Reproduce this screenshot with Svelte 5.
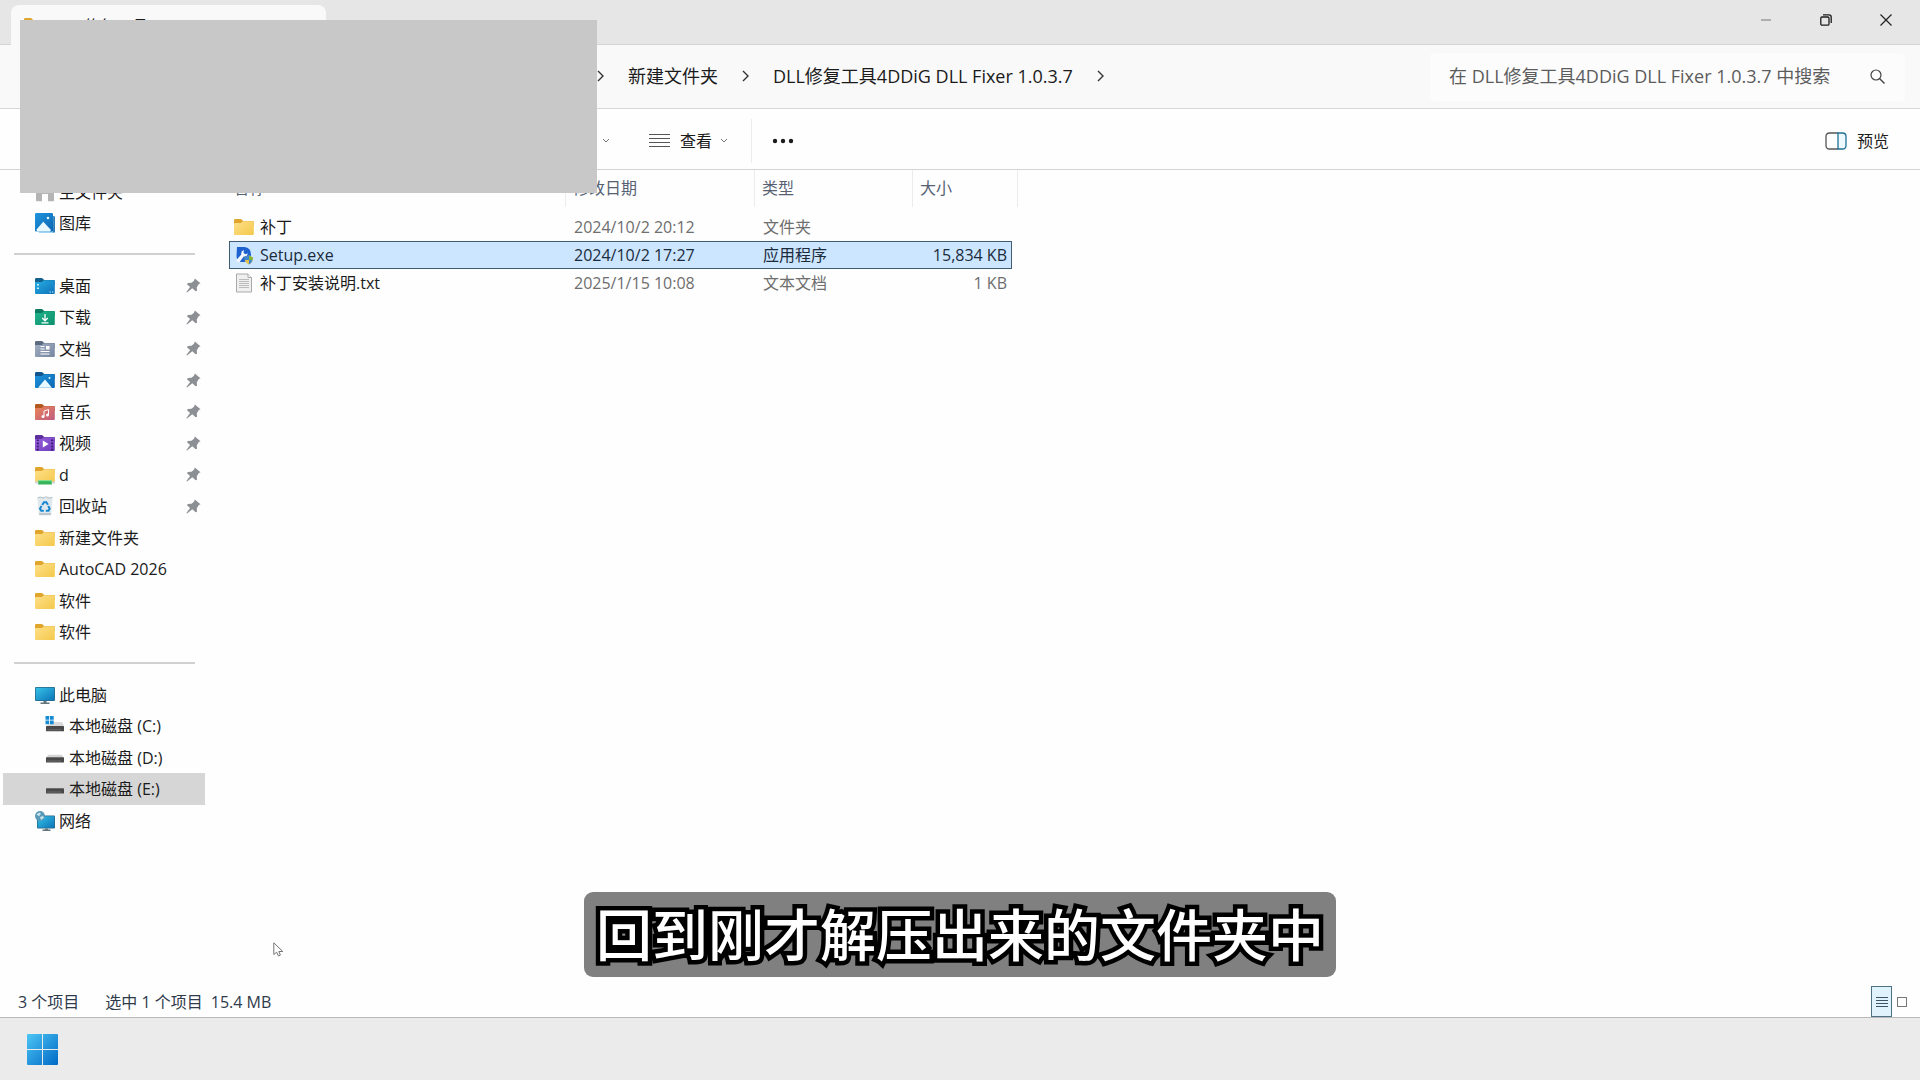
<script>
    const home = [
        { name: "主文件夹", icon: "home" },
        { name: "图库", icon: "gallery" },
    ];

    const pinned = [
        { name: "桌面", icon: "desktop", pin: true },
        { name: "下载", icon: "download", pin: true },
        { name: "文档", icon: "documents", pin: true },
        { name: "图片", icon: "pictures", pin: true },
        { name: "音乐", icon: "music", pin: true },
        { name: "视频", icon: "video", pin: true },
        { name: "d", icon: "shared", pin: true },
        { name: "回收站", icon: "recycle", pin: true },
        { name: "新建文件夹", icon: "folder" },
        { name: "AutoCAD 2026", icon: "folder" },
        { name: "软件", icon: "folder" },
        { name: "软件", icon: "folder" },
    ];

    const computer = [
        { name: "此电脑", icon: "pc" },
        { name: "本地磁盘 (C:)", icon: "system", drive: true },
        { name: "本地磁盘 (D:)", icon: "disk", drive: true },
        { name: "本地磁盘 (E:)", icon: "disk", drive: true, active: true },
        { name: "网络", icon: "network" },
    ];

    const files = [
        { name: "补丁", icon: "folder", date: "2024/10/2 20:12", type: "文件夹", size: "" },
        { name: "Setup.exe", icon: "setup", date: "2024/10/2 17:27", type: "应用程序", size: "15,834 KB" },
        { name: "补丁安装说明.txt", icon: "text", date: "2025/1/15 10:08", type: "文本文档", size: "1 KB" },
    ];

    let selected = $state(1);

    // tab and front colours of the folder icons
    const folders = {
        folder: ["#e0a52c", "url(#g-yellow)"],
        shared: ["#e0a52c", "url(#g-yellow)"],
        desktop: ["#13608f", "url(#g-blue)"],
        download: ["#0b7a5e", "url(#g-green)"],
        documents: ["#5c6b80", "url(#g-slate)"],
        pictures: ["#13568f", "url(#g-azure)"],
        music: ["#b3591f", "url(#g-coral)"],
        video: ["#5b2f9e", "url(#g-purple)"],
    };
</script>

{#snippet icon(kind)}
    <svg class="icon" viewBox="0 0 20 20" aria-hidden="true">
        {#if folders[kind]}
            <path d="M0 3.2Q0 2 1.2 2h5.3q.7 0 1.2.5L9.200 4H19q.8 0 .8.8V9H0z" fill={folders[kind][0]} />
            <path d="M0 7q0-.9.9-.9h5.300q.7 0 1.200-.5L8.500 4.600q.4-.4 1-.4h9.400q.9 0 .9.9v12q0 .9-.9.9H.9q-.9 0-.9-.9z" fill={folders[kind][1]} />
        {/if}
        {#if kind === "desktop"}
            <path d="M2 8h2v1.500H2zM2 11.500h2V13H2zM14.500 15.500h1.300v1h-1.300zM17 15.500h1.300v1H17z" fill="#c8f1ff" />
        {:else if kind === "download"}
            <path d="M10 7v6.500M7.200 11l2.800 2.800 2.800-2.800M6.500 15.800h7" fill="none" stroke="#fff" stroke-width="1.300" />
        {:else if kind === "documents"}
            <path d="M5.500 7.500h4M5.500 10h4M5.500 12.500h9M5.500 15h9" stroke="#fff" stroke-width="1.200" />
            <path d="M11 7h3.500v3.500H11z" fill="#fff" />
        {:else if kind === "pictures"}
            <path d="M3 17.800 10 9.500l7 8.300z" fill="#e8faff" />
            <circle cx="14.500" cy="8" r="1" fill="#e8faff" />
        {:else if kind === "music"}
            <path d="M9 14.500V9l4.500-1.500v5.500" fill="none" stroke="#fff" />
            <circle cx="8" cy="14.500" r="1.500" fill="#fff" />
            <circle cx="12.500" cy="13" r="1.500" fill="#fff" />
        {:else if kind === "video"}
            <path d="M7.800 7.500v7l5.800-3.500z" fill="#fff" />
            <path d="M2.800 6.500v11M17.200 6.500v11" stroke="#3a1a70" stroke-width="2" stroke-dasharray="1.600 1.500" />
        {:else if kind === "shared"}
            <path d="M3 15h14v4.500H3z" fill="#35b558" />
            <path d="M0 17.500h3.500M16.500 17.500H20" stroke="#cfd6d8" stroke-width="2" />
            <path d="M3 15h14v1.200H3z" fill="#82df8f" />
        {:else if kind === "home"}
            <path d="M1 8 10 1l9 7v10.500q0 .8-.8.8H13V12H7v7.300H1.800q-.8 0-.8-.8z" fill="#b4b4b4" />
            <path d="M0 9 10 1l10 8" fill="none" stroke="#e07b32" stroke-width="1.500" />
        {:else if kind === "gallery"}
            <path d="M4 3h14.500q1.300 0 1.300 1.300v14q0 1.500-1.500 1.500H4z" fill="#7cc8ee" />
            <path d="M18.500 3q1.300 0 1.300 1.300v14q0 1.500-1.500 1.500" fill="#1467a8" />
            <rect width="18" height="18.500" rx="1.200" fill="url(#g-azure)" />
            <path d="M1.500 16.500 8.300 8.800l7.700 8.200-1 1.500H2z" fill="#e8f8ff" />
            <circle cx="13" cy="5" r="1.300" fill="#e8f8ff" />
        {:else if kind === "recycle"}
            <path d="M2.500 2h15l-1.300 16.500q-.1 1-1 1H4.800q-.9 0-1-1z" fill="#dfe8ed" />
            <path d="M2.500 2 5 1l3 1 3-1.200L14 2l3.500-.5" fill="none" stroke="#aebac2" />
            <path d="M4 17h12v2H4.500z" fill="#bdc6cc" />
            <path d="m7.200 9 1.800-2.800h2.300L13 8.800M13.200 10l1.500 2.700-1.200 2h-2.700M8.800 14.700H6.200l-1.200-2L6.500 10" fill="none" stroke="#1785d1" stroke-width="2" />
        {:else if kind === "pc"}
            <rect y="2" width="20" height="14" rx="1" fill="#286b8e" />
            <rect x=".8" y="2.800" width="18.400" height="12.400" fill="url(#g-screen)" />
            <path d="M8.500 16h3v1.500h3V19h-9v-1.500h3z" fill="#66747c" />
        {:else if kind === "network"}
            <rect x="2" y="4.500" width="18" height="13" rx="1" fill="#286b8e" />
            <rect x="2.800" y="5.300" width="16.400" height="11.400" fill="url(#g-screen)" />
            <path d="M10 17.500h3v1h2.500V20h-8v-1.500H10z" fill="#66747c" />
            <circle cx="5" cy="5" r="5" fill="#5a9ab7" />
            <path d="M1.500 3.500 4 1.500l2 1.300-2 2.500zM5 6l3-1 1 1.800L6 9z" fill="#c8e4ec" />
        {:else if kind === "disk"}
            <path d="M2.500 6.800h13l2.500 3H0z" fill="#d5d5d5" />
            <rect y="9.200" width="18" height="5.300" rx=".6" fill="#494949" />
            <path d="M1 13h14" stroke="#6d6d6d" />
        {:else if kind === "system"}
            <path d="M8 6h8l2 4H0z" fill="#d9d9d9" />
            <rect y="10" width="18" height="5.300" rx=".6" fill="#494949" />
            <path d="M1 13.800h14" stroke="#6d6d6d" />
            <path d="M-.5 0h3.700v3.700H-.5zM4 0h3.700v3.700H4zM-.5 4.500h3.700v3.700H-.5zM4 4.500h3.700v3.700H4z" fill="#168bd3" />
        {:else if kind === "setup"}
            <path d="M3 2h7.500q6.500.5 6.500 7.500 0 7-7 7.500H7q-4.500-1-4.500-6z" fill="#1e62cf" />
            <path d="M2 15.500 7.300 9.500Q6.500 6 10 5l-.5 2.700 1.800 1.500 2.500-.7q-.5 3.300-4 3L5.500 17q-2 .8-3.500-1.500z" fill="#f2f7ff" />
            <path d="M10.500 12.500 15 10.500l4 2q0 5-4.200 7-4.300-2-4.300-7z" fill="#e9c440" />
            <path d="M15 10.500v4.500h-4.300q-.2-1.200-.2-2.500z" fill="#3c83d2" />
            <path d="M15 15h3.500q-.8 3-3.700 4.500z" fill="#3c83d2" />
            <path d="M15 10.500v4.500h3.700q.3-1.200.3-2.500z" fill="#86b53b" />
        {:else if kind === "text"}
            <path d="M2.500 1h11.500l3.500 3.500V19h-15z" fill="#f0f0f0" stroke="#a9a9a9" />
            <path d="M14 1v3.500h3.500" fill="#fff" stroke="#a9a9a9" />
            <path d="M5 6.500h10M5 8.500h10M5 10.500h10M5 12.500h10M5 14.500h10" stroke="#b5b5b5" stroke-width=".9" />
        {/if}
    </svg>
{/snippet}

{#snippet chevron()}
    <svg class="chevron" viewBox="0 0 7 12" aria-hidden="true">
        <path d="m1 1 5 5-5 5" fill="none" stroke="#333" stroke-width="1.400" />
    </svg>
{/snippet}

{#snippet caret()}
    <svg class="caret" viewBox="0 0 8 6" aria-hidden="true">
        <path d="m1 1 3 3 3-3" fill="none" stroke="#777" />
    </svg>
{/snippet}

{#snippet places(items)}
    <ul>
        {#each items as item}
            <li>
                <a href="#top" class:drive={item.drive} class:active={item.active}>
                    {@render icon(item.icon)}
                    <span>{item.name}</span>
                    {#if item.pin}
                        <svg class="pin" viewBox="0 0 15 15" aria-hidden="true">
                            <path d="m8.800.5 5.700 4.800-1.700.8-2 3.200.2 3.400-1.300.6-3.400-3L1 14.500l-.6-.5 3.700-5L1 6.300l.8-1.200 3.700-.3 2.500-2z" fill="#8c8f93" />
                        </svg>
                    {/if}
                </a>
            </li>
        {/each}
    </ul>
{/snippet}

<svg class="defs" aria-hidden="true">
    <defs>
        <linearGradient id="g-yellow" x2="1" y2="1"><stop stop-color="#ffe08a" /><stop offset="1" stop-color="#f3c84b" /></linearGradient>
        <linearGradient id="g-blue" x2="1" y2="1"><stop stop-color="#27b0e4" /><stop offset="1" stop-color="#0e70b8" /></linearGradient>
        <linearGradient id="g-green" x2="1" y2="1"><stop stop-color="#21b58c" /><stop offset="1" stop-color="#0c8f6c" /></linearGradient>
        <linearGradient id="g-slate" x2="1" y2="1"><stop stop-color="#a3b0c4" /><stop offset="1" stop-color="#7686a0" /></linearGradient>
        <linearGradient id="g-azure" x2="1" y2="1"><stop stop-color="#1f96dc" /><stop offset="1" stop-color="#0c65b3" /></linearGradient>
        <linearGradient id="g-coral" x2="1" y2="1"><stop stop-color="#ea8756" /><stop offset="1" stop-color="#bf5a80" /></linearGradient>
        <linearGradient id="g-purple" x2="1" y2="1"><stop stop-color="#9a62dd" /><stop offset="1" stop-color="#6e3cbd" /></linearGradient>
        <linearGradient id="g-screen" x2="1" y2="1"><stop stop-color="#36c2e6" /><stop offset="1" stop-color="#0c75b9" /></linearGradient>
        <linearGradient id="g-start" x2="1" y2="1"><stop stop-color="#4cc6f5" /><stop offset="1" stop-color="#0068c6" /></linearGradient>
    </defs>
</svg>

<div class="desktop" id="top">
    <header class="titlebar">
        <div class="tab">
            {@render icon("folder")}
            <span>DLL修复工具4DDiG DLL Fixer</span>
        </div>
        <div class="controls">
            <button aria-label="最小化">
                <svg viewBox="0 0 12 12"><path d="M1 6h10" stroke="#777" /></svg>
            </button>
            <button aria-label="还原">
                <svg viewBox="0 0 12 12" fill="none" stroke="#1c1c1c" stroke-width="1.300">
                    <rect x=".8" y="3" width="8.200" height="8.200" rx="1.200" />
                    <path d="M3 .9h6q2.200 0 2.200 2.200v6" />
                </svg>
            </button>
            <button aria-label="关闭">
                <svg viewBox="0 0 12 12"><path d="m.5.5 11 11m0-11-11 11" stroke="#222" stroke-width="1.200" /></svg>
            </button>
        </div>
    </header>

    <div class="address">
        <nav class="crumbs">
            {@render chevron()}
            <a href="#top">新建文件夹</a>
            {@render chevron()}
            <a href="#top">DLL修复工具4DDiG DLL Fixer 1.0.3.7</a>
            {@render chevron()}
        </nav>
        <div class="search">
            <input type="text" aria-label="搜索" placeholder="在 DLL修复工具4DDiG DLL Fixer 1.0.3.7 中搜索" />
            <svg viewBox="0 0 15 15" aria-hidden="true">
                <path d="m9.500 9.500 5 5" stroke="#444" stroke-width="1.400" />
                <circle cx="6" cy="6" r="5" fill="none" stroke="#444" stroke-width="1.200" />
            </svg>
        </div>
    </div>

    <div class="toolbar">
        {@render caret()}
        <button class="view">
            <svg viewBox="0 0 21 14" aria-hidden="true"><path d="M0 .5h21M0 4.500h21M0 8.500h21M0 12.500h21" stroke="#555" /></svg>
            <span>查看</span>
            {@render caret()}
        </button>
        <button class="more" aria-label="更多">
            <svg viewBox="0 0 22 6" aria-hidden="true" fill="#1c1c1c">
                <circle cx="3" cy="3" r="2.200" /><circle cx="11" cy="3" r="2.200" /><circle cx="19" cy="3" r="2.200" />
            </svg>
        </button>
        <button class="preview">
            <svg viewBox="0 0 22 18" aria-hidden="true" fill="none" stroke-width="1.300">
                <path d="M13 1H4.500Q1 1 1 4.500v9Q1 17 4.500 17H13" stroke="#555" />
                <path d="M13 1h4.500Q21 1 21 4.500v9q0 3.500-3.500 3.500H13z" stroke="#1f7096" fill="#edf9fe" />
            </svg>
            <span>预览</span>
        </button>
    </div>

    <main>
        <nav class="sidebar">
            {@render places(home)}
            <hr />
            {@render places(pinned)}
            <hr />
            {@render places(computer)}
        </nav>

        <section class="files">
            <table>
                <colgroup>
                    <col class="c-name" /><col class="c-date" /><col class="c-type" /><col class="c-size" /><col class="c-end" />
                </colgroup>
                <thead>
                    <tr>
                        <th><span>名称</span></th>
                        <th><span>修改日期</span></th>
                        <th><span>类型</span></th>
                        <th colspan="2"><span>大小</span></th>
                    </tr>
                </thead>
                <tbody>
                    {#each files as file, i}
                        <tr class:selected={selected === i} onclick={() => (selected = i)}>
                            <td><div class="name">{@render icon(file.icon)}{file.name}</div></td>
                            <td>{file.date}</td>
                            <td>{file.type}</td>
                            <td class="size">{file.size}</td>
                        </tr>
                    {/each}
                </tbody>
            </table>
        </section>
    </main>

    <footer class="status">
        <span class="count">3 个项目</span>
        <span class="chosen">选中 1 个项目</span>
        <span>15.4 MB</span>
        <div class="layouts">
            <button class="details" aria-label="详细信息">
                <svg viewBox="0 0 12 12"><path d="M0 1.500h12M0 4.500h12M0 7.500h12M0 10.500h12" stroke="#3b5566" /></svg>
            </button>
            <button class="large" aria-label="大图标"></button>
        </div>
    </footer>

    <div class="taskbar">
        <button aria-label="开始">
            <svg viewBox="0 0 31 31">
                <path d="M1 0h14v15H0V1q0-1 1-1zM16 0h14q1 0 1 1v14H16zM0 16h15v15H1q-1 0-1-1zM16 16h15v14q0 1-1 1H16z" fill="url(#g-start)" />
            </svg>
        </button>
    </div>

    <div class="cover"></div>
    <p class="caption">回到刚才解压出来的文件夹中</p>
    <svg class="cursor" viewBox="0 0 11 15" aria-hidden="true">
        <path d="M.8.800v11.700l2.900-2.300 1.700 3.800 2-.9-1.600-3.600h4z" fill="#fff" stroke="#777" />
    </svg>
</div>

<style>
    :global(body) {
        margin: 0;
    }

    .desktop {
        position: relative;
        display: flex;
        flex-direction: column;
        min-height: 100vh;
        overflow: hidden;
        background: #fefefe;
        color: #1b1b1b;
        font: 16px/24px "Open Sans", "Noto Sans CJK SC", sans-serif;
    }

    .defs {
        position: absolute;
        width: 0;
        height: 0;
    }

    svg {
        display: block;
        flex: none;
        overflow: visible;
    }

    button {
        display: flex;
        align-items: center;
        padding: 0;
        border: 0;
        background: none;
        color: inherit;
        font: inherit;
    }

    a {
        color: inherit;
        text-decoration: none;
    }

    .icon {
        width: 20px;
        height: 20px;
    }

    .titlebar {
        display: flex;
        justify-content: space-between;
        height: 44px;
        border-bottom: 1px solid #d4d4d4;
        background: #e6e6e6;
    }

    .tab {
        display: flex;
        align-items: center;
        gap: 12px;
        box-sizing: border-box;
        width: 315px;
        height: 40px;
        margin: 5px 0 0 11px;
        padding: 2px 0 0 13px;
        border-radius: 8px 8px 0 0;
        background: #f9f9f9;
    }

    .controls {
        display: flex;
        margin-right: 4px;
    }

    .controls button {
        justify-content: center;
        width: 60px;
        height: 40px;
    }

    .controls svg {
        width: 12px;
        height: 12px;
    }

    .address {
        display: flex;
        align-items: center;
        justify-content: space-between;
        height: 63px;
        padding-right: 15px;
        border-bottom: 1px solid #d6d6d6;
        background: #f9f9f9;
        font-size: 18px;
    }

    .crumbs {
        display: flex;
        align-items: center;
        gap: 24px;
        padding: 0 0 2px 597px;
    }

    .chevron {
        width: 7px;
        height: 12px;
    }

    .search {
        display: flex;
        align-items: center;
        box-sizing: border-box;
        width: 475px;
        height: 48px;
        padding: 0 20px 1px 19px;
        border-radius: 4px;
        background: #fcfcfc;
    }

    .search input {
        flex: 1;
        min-width: 0;
        padding: 0;
        border: 0;
        outline: 0;
        background: none;
        font: inherit;
    }

    .search input::placeholder {
        color: #5c5c5c;
        opacity: 1;
    }

    .search svg {
        width: 15px;
        height: 15px;
    }

    .toolbar {
        display: flex;
        align-items: center;
        box-sizing: border-box;
        height: 61px;
        padding: 4px 31px 0 602px;
        border-bottom: 1px solid #d4d4d4;
        background: #fefefe;
    }

    .caret {
        width: 8px;
        height: 6px;
    }

    .view {
        gap: 8px;
        margin-left: 39px;
        padding-right: 23px;
    }

    .view > svg:first-child {
        width: 21px;
        height: 14px;
        margin-right: 2px;
    }

    .more {
        height: 44px;
        padding-left: 20px;
        border-left: 1px solid #ececec;
    }

    .more svg {
        width: 22px;
        height: 6px;
    }

    .preview {
        gap: 10px;
        margin-left: auto;
    }

    .preview svg {
        width: 22px;
        height: 18px;
    }

    main {
        display: flex;
        flex: 1;
    }

    .sidebar {
        width: 208px;
        padding-top: 6px;
    }

    .sidebar ul {
        margin: 0;
        padding: 0 3px;
        list-style: none;
    }

    .sidebar li {
        height: 31px;
    }

    .sidebar li:nth-child(even) {
        height: 32px;
    }

    .sidebar a {
        display: flex;
        align-items: center;
        gap: 4px;
        height: 100%;
        padding: 0 4px 0 32px;
    }

    .sidebar a.drive {
        padding-left: 43px;
        gap: 3px;
    }

    .sidebar a.active {
        background: #d6d6d6;
    }

    .sidebar hr {
        height: 2px;
        margin: 14px 13px 15px 14px;
        border: 0;
        background: #d0d0d0;
    }

    .pin {
        width: 15px;
        height: 15px;
        margin-left: auto;
    }

    .files {
        flex: 1;
        padding-left: 21px;
    }

    table {
        width: 789px;
        border-spacing: 0;
        table-layout: fixed;
    }

    .c-name {
        width: 337px;
    }

    .c-date {
        width: 189px;
    }

    .c-type {
        width: 158px;
    }

    .c-size {
        width: 99px;
    }

    .c-end {
        width: 6px;
    }

    th {
        padding: 0 0 6px;
        color: #566173;
        font-weight: 400;
        text-align: left;
    }

    th span {
        display: block;
        padding-left: 7px;
        border-right: 1px solid #ececec;
        line-height: 37px;
    }

    th:first-child span {
        padding-left: 4px;
    }

    td {
        box-sizing: border-box;
        height: 28px;
        padding: 0 8px;
        border: solid transparent;
        border-width: 1px 0;
        color: #6e6e6e;
        white-space: nowrap;
    }

    td:first-child {
        padding: 0 0 0 4px;
        border-left-width: 1px;
        color: #1b1b1b;
    }

    td.size {
        padding-right: 4px;
        border-right-width: 1px;
        text-align: right;
    }

    .selected td {
        border-color: #3f5c73;
        background: #cce6ff;
        color: #1b2b3c;
    }

    .name {
        display: flex;
        align-items: center;
        gap: 6px;
    }

    .status {
        display: flex;
        align-items: center;
        height: 31px;
        padding: 0 13px 0 18px;
        color: #2f3a4b;
    }

    .count {
        margin-right: 26px;
    }

    .chosen {
        margin-right: 8px;
    }

    .layouts {
        display: flex;
        align-items: center;
        gap: 5px;
        margin-left: auto;
    }

    .details {
        justify-content: center;
        box-sizing: border-box;
        width: 21px;
        height: 31px;
        border: 1px solid #4d7286;
        background: #e0f2fb;
    }

    .details svg {
        width: 12px;
        height: 12px;
    }

    .large {
        box-sizing: border-box;
        width: 10px;
        height: 10px;
        border: 1px solid #777;
    }

    .taskbar {
        display: flex;
        align-items: center;
        height: 62px;
        padding-left: 27px;
        border-top: 1px solid #b9b9b9;
        background: #ebebeb;
    }

    .taskbar svg {
        width: 31px;
        height: 31px;
    }

    /* overlays */
    .cover {
        position: absolute;
        top: 20px;
        left: 20px;
        width: 577px;
        height: 173px;
        background: #c8c8c8;
    }

    .caption {
        position: absolute;
        bottom: 103px;
        left: 50%;
        margin: 0;
        padding: 0 12px 6px;
        border-radius: 9px;
        background: #808080;
        color: #fff;
        font: 500 56px/79px "Noto Sans CJK SC", sans-serif;
        white-space: nowrap;
        transform: translateX(-50%);
        -webkit-text-stroke: 9px #000;
        paint-order: stroke fill;
    }

    .cursor {
        position: absolute;
        bottom: 123px;
        left: 273px;
        width: 11px;
        height: 15px;
    }
</style>
